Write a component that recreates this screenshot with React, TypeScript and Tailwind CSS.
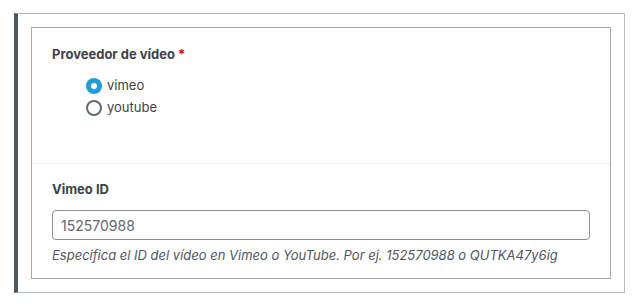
import { useState } from 'react';

const FONT = { fontFamily: 'Inter, "Noto Sans", sans-serif' };

function Radio({ checked, label, onSelect }: { checked: boolean; label: string; onSelect: () => void }) {
    return (
        <label className="flex h-[22px] cursor-pointer items-center gap-[5px] text-[13px] text-[#3c434a]" onClick={onSelect}>
            {checked ? (
                <span className="flex h-4 w-4 items-center justify-center rounded-full bg-[#1e9dd6]">
                    <span className="h-[6px] w-[6px] rounded-full bg-white" />
                </span>
            ) : (
                <span className="h-4 w-4 rounded-full border-2 border-[#646970] bg-white" />
            )}
            <span>{label}</span>
        </label>
    );
}

export default function App() {
    const [provider, setProvider] = useState('vimeo');

    return (
        <div className="min-h-screen bg-white pb-[12px] pl-[14px] pr-[18px] pt-[13px]" style={FONT}>
            <div className="border border-l-4 border-[#b4bbc1] border-l-[#50575e] p-[13px]">
                <div className="border border-[#a7aaad]">
                    <div className="h-[136px] border-b border-[#ececec] px-5 pt-[17px]">
                        <div className="text-[13px] font-bold leading-[18px] text-[#3c434a]">
                            Proveedor de vídeo <span className="text-[#e00000]">*</span>
                        </div>
                        <div className="mt-[12px] pl-[34px]">
                            <Radio checked={provider === 'vimeo'} label="vimeo" onSelect={() => setProvider('vimeo')} />
                            <Radio checked={provider === 'youtube'} label="youtube" onSelect={() => setProvider('youtube')} />
                        </div>
                    </div>
                    <div className="h-[114px] px-5 pt-[16px]">
                        <div className="text-[13px] font-bold leading-[18px] text-[#3c434a]">Vimeo ID</div>
                        <input
                            className="mt-[12px] h-[30px] w-[538px] rounded-[4px] border border-[#8c8f94] px-2 text-[14px] text-[#646970] outline-none"
                            defaultValue="152570988"
                        />
                        <p className="mt-[6px] text-[13px] italic leading-[18px] text-[#50575e]">
                            Especifica el ID del vídeo en Vimeo o YouTube. Por ej. 152570988 o QUTKA47y6ig
                        </p>
                    </div>
                </div>
            </div>
        </div>
    );
}
